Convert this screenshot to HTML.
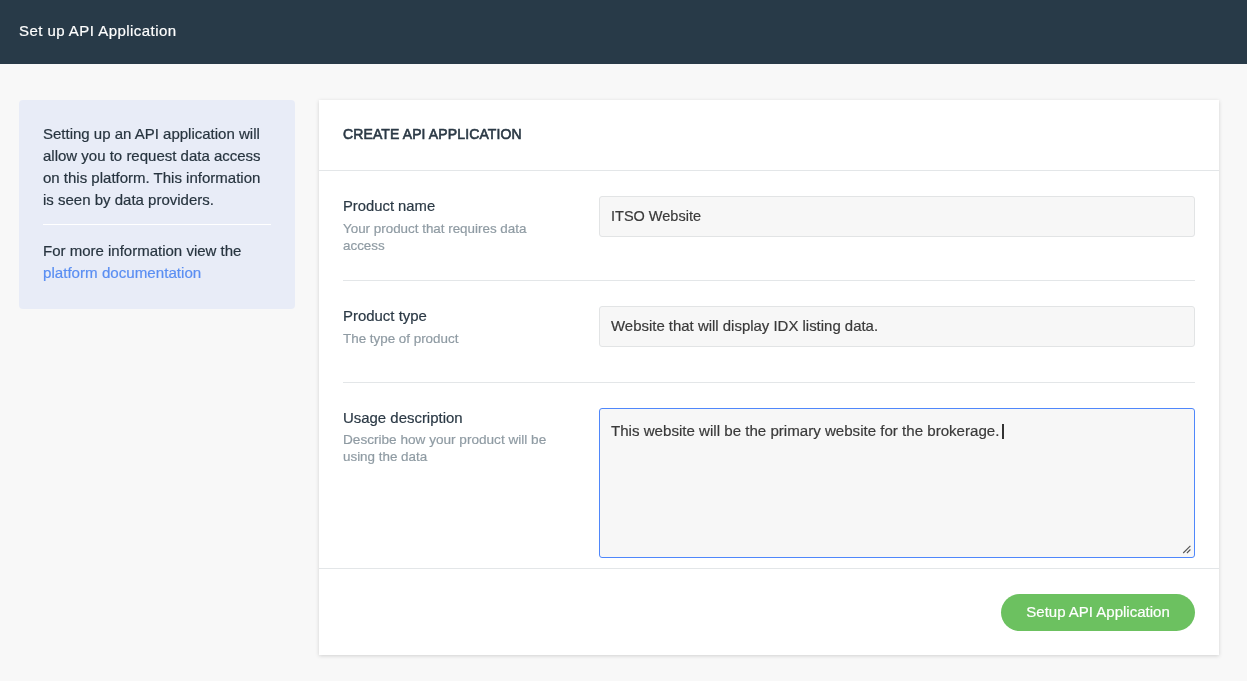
<!DOCTYPE html>
<html><head><meta charset="utf-8">
<style>
*{box-sizing:border-box;margin:0;padding:0}
html,body{width:1247px;height:681px;overflow:hidden}
body{background:#f8f8f8;will-change:transform;font-family:"Liberation Sans",sans-serif;position:relative;color:#2b3945}
.a{position:absolute;white-space:nowrap;-webkit-text-stroke-width:.2px}
.hdr{left:0;top:0;width:1247px;height:64px;background:#283a48}
.hdr .t{left:19px;top:21px;font-size:15px;line-height:20px;letter-spacing:.45px;color:#fff}
.info{left:19px;top:100px;width:276px;height:209px;background:#e8ecf7;border-radius:4px}
.info .l{left:24px;font-size:15px;line-height:22px;color:#27343f}
.info .sep{left:24px;top:124px;width:228px;height:1px;background:#fff}
.info .link{color:#5a8ef2;font-size:15.15px}
.card{left:319px;top:100px;width:900px;height:555px;background:#fff;box-shadow:0 1px 4px rgba(0,0,0,.16)}
.ch{left:24px;top:24px;font-size:14px;line-height:20px;letter-spacing:.12px;-webkit-text-stroke-width:.6px;color:#2b3945}
.line{height:1px;background:#e3e6e8}
.lbl{left:24px;font-size:14.8px;line-height:20px;color:#2b3945}
.help{left:24px;font-size:13.4px;line-height:17px;color:#8f9ba3}
.inp{left:280px;width:596px;background:#f7f7f7;border:1px solid #e2e4e5;border-radius:3px}
.it{left:292px;font-size:14.8px;line-height:20px;color:#3a3a3a}
.btn{left:682px;top:494px;width:194px;height:37px;border-radius:18.5px;background:#6cc160}
.bt{left:682px;top:493px;width:194px;font-size:15px;line-height:37px;color:#fff;text-align:center}
</style></head>
<body>
<div class="a hdr"><div class="a t">Set up API Application</div></div>

<div class="a info">
<div class="a l" style="top:23px">Setting up an API application will</div>
<div class="a l" style="top:45px">allow you to request data access</div>
<div class="a l" style="top:67px">on this platform. This information</div>
<div class="a l" style="top:89px">is seen by data providers.</div>
<div class="a sep"></div>
<div class="a l" style="top:140px">For more information view the</div>
<div class="a l link" style="top:162px">platform documentation</div>
</div>

<div class="a card">
<div class="a ch">CREATE API APPLICATION</div>
<div class="a line" style="left:0;top:70px;width:900px"></div>

<div class="a lbl" style="top:96px">Product name</div>
<div class="a help" style="top:120px">Your product that requires data</div>
<div class="a help" style="top:137px">access</div>
<div class="a inp" style="top:96px;height:41px"></div>
<div class="a it" style="top:106px;font-size:14.5px">ITSO Website</div>
<div class="a line" style="left:24px;top:180px;width:852px"></div>

<div class="a lbl" style="top:206px;font-size:14.95px">Product type</div>
<div class="a help" style="top:230px">The type of product</div>
<div class="a inp" style="top:206px;height:41px"></div>
<div class="a it" style="top:216px;font-size:14.95px">Website that will display IDX listing data.</div>
<div class="a line" style="left:24px;top:282px;width:852px"></div>

<div class="a lbl" style="top:308px;font-size:14.95px">Usage description</div>
<div class="a help" style="top:331px;font-size:13.6px">Describe how your product will be</div>
<div class="a help" style="top:348px">using the data</div>
<div class="a inp" style="top:308px;height:150px;border-color:#4f87fb"></div>
<div class="a it" style="top:321px;font-size:15.1px">This website will be the primary website for the brokerage.</div>
<div class="a" style="left:683px;top:324px;width:2px;height:15px;background:#333"></div>
<svg class="a" style="left:860px;top:442px" width="14" height="14" viewBox="0 0 14 14"><path d="M4.2 11 L11.4 3.8 M7.9 11 L11.4 7.5" stroke="#555" stroke-width="1.1" fill="none"/></svg>
<div class="a line" style="left:0;top:468px;width:900px"></div>

<div class="a btn"></div>
<div class="a bt">Setup API Application</div>
</div>
</body></html>
